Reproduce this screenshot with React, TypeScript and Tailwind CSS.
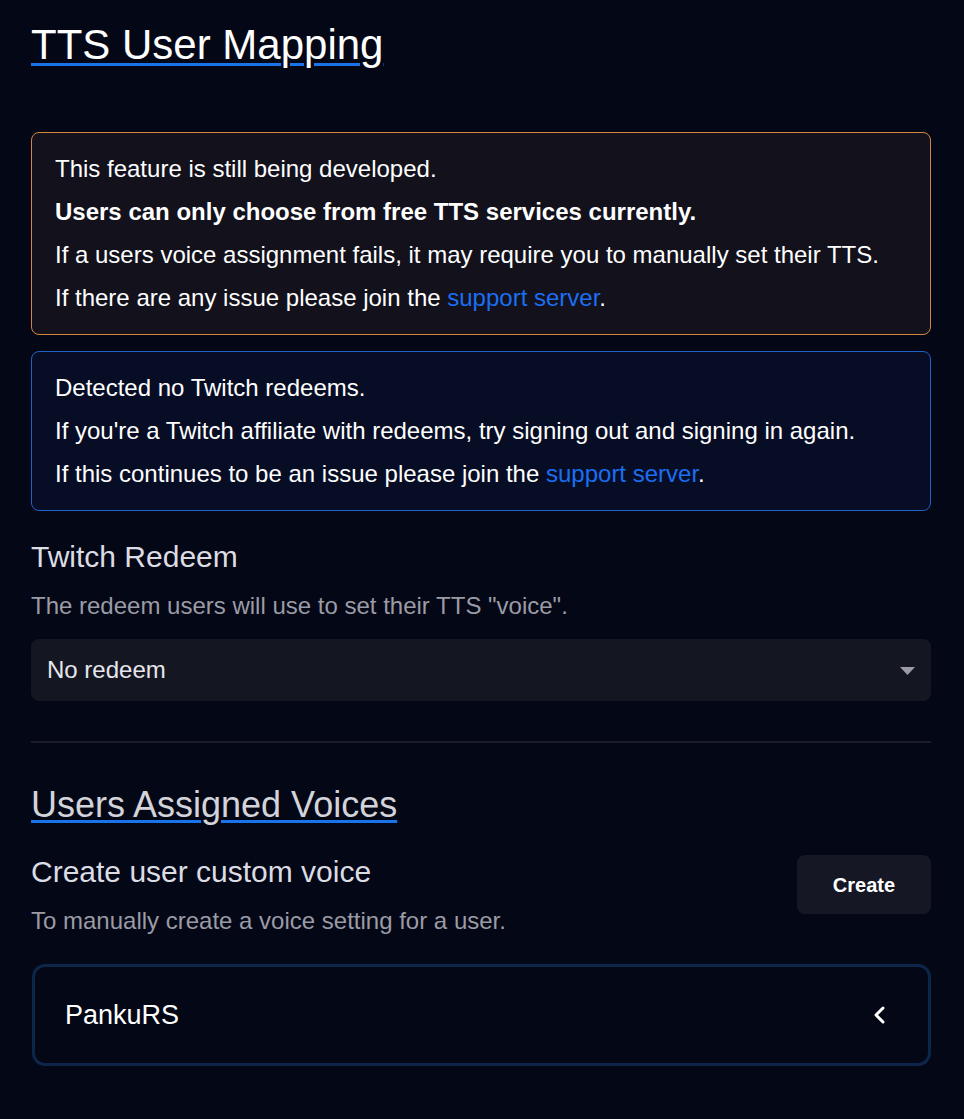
const Notice: React.FC<{ tone: "warn" | "info"; children: React.ReactNode }> = ({ tone, children }) => {
  const cls =
    tone === "warn"
      ? "border-[#d2873c] bg-[#12111c]"
      : "border-[#1f62c9] bg-[#070d24]";
  return (
    <div className={`rounded-[8px] border px-[23px] py-[18px] flex flex-col gap-[7px] text-white ${cls}`}>
      {children}
    </div>
  );
};

const Link: React.FC<{ children: React.ReactNode }> = ({ children }) => (
  <a href="#" className="text-[#1c6ef2]">
    {children}
  </a>
);

const App: React.FC = () => {
  return (
    <div
      className="min-h-[1119px] bg-[#040716] pl-[31px] pr-[33px] pt-[20px] text-[24px] leading-[36px]"
      style={{ fontFamily: '"Liberation Sans", Arial, sans-serif' }}
    >
      <h1 className="text-[42px] leading-[50px] text-white underline decoration-[#1a73e8] decoration-[3px] underline-offset-[4px]">
        TTS User Mapping
      </h1>

      <div className="mt-[62px]">
        <Notice tone="warn">
          <p>This feature is still being developed.</p>
          <p className="font-bold">Users can only choose from free TTS services currently.</p>
          <p>If a users voice assignment fails, it may require you to manually set their TTS.</p>
          <p>
            If there are any issue please join the <Link>support server</Link>.
          </p>
        </Notice>
      </div>

      <div className="mt-[16px]">
        <Notice tone="info">
          <p>Detected no Twitch redeems.</p>
          <p>If you're a Twitch affiliate with redeems, try signing out and signing in again.</p>
          <p>
            If this continues to be an issue please join the <Link>support server</Link>.
          </p>
        </Notice>
      </div>

      <h3 className="mt-[28px] text-[30px] leading-[36px] text-[#dcdce3]">Twitch Redeem</h3>
      <p className="mt-[13px] text-[#9b9ba5]">The redeem users will use to set their TTS "voice".</p>

      <div className="mt-[15px] h-[62px] rounded-[8px] bg-[#141622] pl-[16px] pr-[16px] flex items-center justify-between text-[#e6e6ec]">
        <span>No redeem</span>
        <svg width="15" height="8" viewBox="0 0 15 8" className="mt-[2px]">
          <path d="M0 0 H15 L7.5 8 Z" fill="#9b9ba5" />
        </svg>
      </div>

      <div className="mt-[40px] h-[2px] bg-[#1a1c2a]" />

      <h2 className="mt-[40px] text-[36px] leading-[44px] text-[#d3d3da] underline decoration-[#1a73e8] decoration-[3px] underline-offset-[3px]">
        Users Assigned Voices
      </h2>

      <div className="mt-[27px] flex items-start justify-between">
        <div>
          <h3 className="text-[30px] leading-[36px] text-[#dcdce3]">Create user custom voice</h3>
          <p className="mt-[13px] text-[#9b9ba5]">To manually create a voice setting for a user.</p>
        </div>
        <button className="mt-[1px] h-[59px] w-[134px] rounded-[8px] bg-[#151724] text-[20px] font-bold text-white">
          Create
        </button>
      </div>

      <div className="mt-[25px] ml-[1px] h-[102px] rounded-[13px] border-[3px] border-[#0c2548] pl-[30px] pr-[42px] flex items-center justify-between">
        <span className="text-[27px] leading-[32px] text-white">PankuRS</span>
        <svg width="14" height="20" viewBox="0 0 14 20" fill="none">
          <path d="M11 3 L4 10 L11 17" stroke="white" strokeWidth="3" strokeLinecap="round" strokeLinejoin="round" />
        </svg>
      </div>
    </div>
  );
};

export default App;
